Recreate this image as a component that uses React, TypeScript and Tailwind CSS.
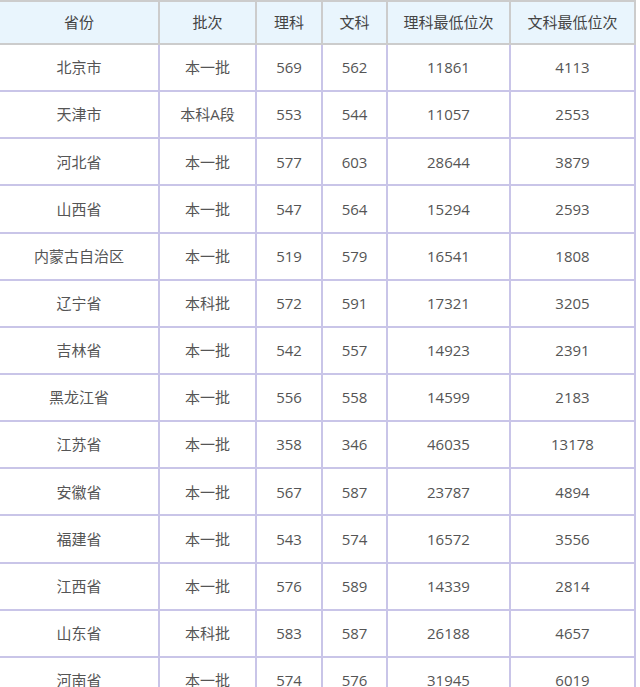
const rows: [string, string, number, number, number, number][] = [
  ["北京市", "本一批", 569, 562, 11861, 4113],
  ["天津市", "本科A段", 553, 544, 11057, 2553],
  ["河北省", "本一批", 577, 603, 28644, 3879],
  ["山西省", "本一批", 547, 564, 15294, 2593],
  ["内蒙古自治区", "本一批", 519, 579, 16541, 1808],
  ["辽宁省", "本科批", 572, 591, 17321, 3205],
  ["吉林省", "本一批", 542, 557, 14923, 2391],
  ["黑龙江省", "本一批", 556, 558, 14599, 2183],
  ["江苏省", "本一批", 358, 346, 46035, 13178],
  ["安徽省", "本一批", 567, 587, 23787, 4894],
  ["福建省", "本一批", 543, 574, 16572, 3556],
  ["江西省", "本一批", 576, 589, 14339, 2814],
  ["山东省", "本科批", 583, 587, 26188, 4657],
  ["河南省", "本一批", 574, 576, 31945, 6019],
];

const headers = ["省份", "批次", "理科", "文科", "理科最低位次", "文科最低位次"];

export default function App() {
  return (
    <div className="w-[640px] h-[687px] overflow-hidden bg-white">
      <table
        className="border-collapse table-fixed w-[636px] -ml-[2px] text-[15px] text-[#555]"
        style={{ fontFamily: '"Open Sans", "Noto Sans CJK SC", sans-serif' }}
      >
        <colgroup>
          <col className="w-[160px]" />
          <col className="w-[97px]" />
          <col className="w-[66px]" />
          <col className="w-[65px]" />
          <col className="w-[123px]" />
          <col className="w-[125px]" />
        </colgroup>
        <thead>
          <tr className="h-[43px] bg-[#e9f5fd]">
            {headers.map((h) => (
              <th key={h} className="border-2 border-[#cccccc] font-normal text-[#444] text-center p-0">
                {h}
              </th>
            ))}
          </tr>
        </thead>
        <tbody>
          {rows.map((r) => (
            <tr key={r[0]} className="h-[47.15px]">
              {r.map((c, i) => (
                <td key={i} className="border-2 border-[#c9c5e8] text-center p-0">
                  {c}
                </td>
              ))}
            </tr>
          ))}
        </tbody>
      </table>
    </div>
  );
}
